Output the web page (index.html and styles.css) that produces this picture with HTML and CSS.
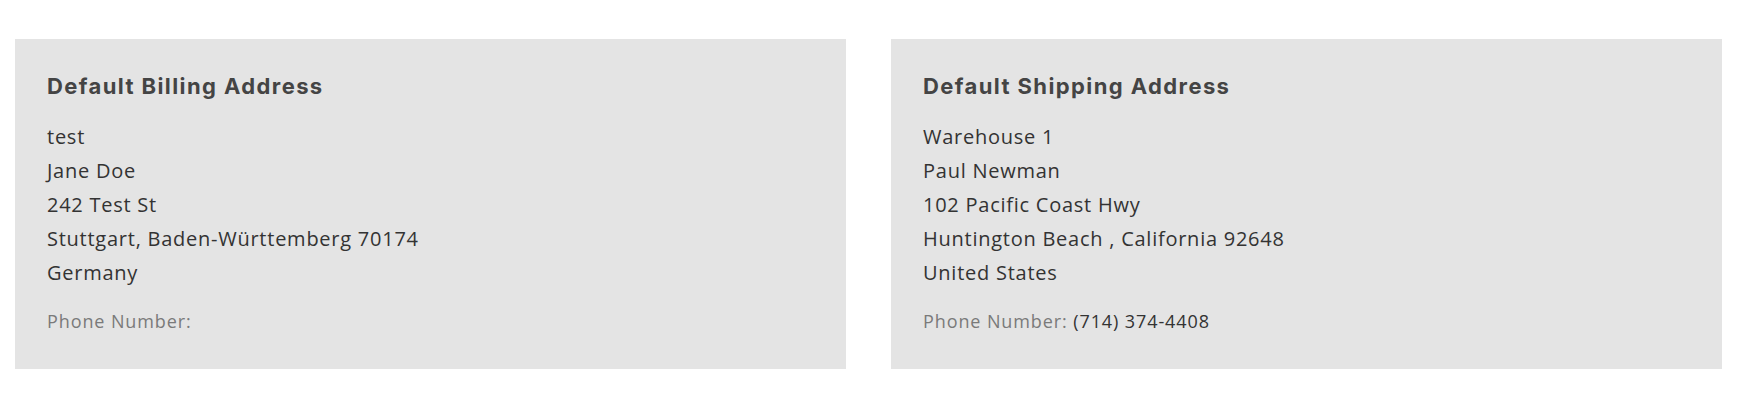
FILE: index.html
```html
<!DOCTYPE html>
<html lang="en">
<head>
    <meta charset="UTF-8">
    <meta name="viewport" content="width=device-width, initial-scale=1.0">
    <title>Addresses</title>
    <link rel="stylesheet" href="styles.css">
</head>
<body>
    <div class="addresses">
        <div class="address-box">
            <h2>Default Billing Address</h2>
            <address>
                test<br>
                Jane Doe<br>
                242 Test St<br>
                Stuttgart, Baden-Württemberg 70174<br>
                Germany
            </address>
            <p class="phone"><span class="label">Phone Number:</span></p>
        </div>
        <div class="address-box">
            <h2>Default Shipping Address</h2>
            <address>
                Warehouse 1<br>
                Paul Newman<br>
                102 Pacific Coast Hwy<br>
                Huntington Beach , California 92648<br>
                United States
            </address>
            <p class="phone"><span class="label">Phone Number:</span> (714) 374-4408</p>
        </div>
    </div>
</body>
</html>
```

FILE: styles.css
```css
html, body {
    margin: 0;
    background: #fff;
    font-family: "Open Sans", Arial, sans-serif;
    color: #333;
}
.addresses {
    display: flex;
    gap: 45px;
    padding: 39px 0 0 15px;
}
.address-box {
    width: 831px;
    height: 330px;
    box-sizing: border-box;
    background: #e4e4e4;
    padding: 33px 32px 0;
}
.address-box h2 {
    margin: 0 0 20px;
    font-family: Inter, "Liberation Sans", sans-serif;
    font-weight: 700;
    font-size: 22px;
    line-height: 28px;
    letter-spacing: 1.4px;
    color: #444;
}
.address-box address {
    font-style: normal;
    font-size: 20px;
    line-height: 34px;
    letter-spacing: 0.75px;
}
.phone {
    margin: 14px 0 0;
    font-size: 18px;
    line-height: 34px;
    letter-spacing: 0.9px;
}
.phone .label {
    color: #7a7a7a;
}
```
